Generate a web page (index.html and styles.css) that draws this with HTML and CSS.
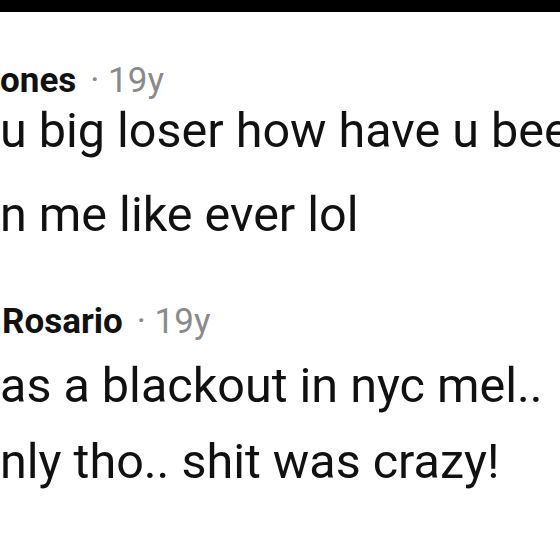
FILE: index.html
```html
<!DOCTYPE html>
<html>
<head>
<meta charset="utf-8">
<link rel="stylesheet" href="styles.css">
</head>
<body>
<div class="topbar"></div>
<div class="thread">
  <div class="comment first">
    <div class="meta"><span class="name">ones</span><span class="time">· 19y</span></div>
    <div class="body">
      <div class="line">u big loser how have u been</div>
      <div class="line">n me like ever lol</div>
    </div>
  </div>
  <div class="comment second">
    <div class="meta"><span class="name">Rosario</span><span class="time">· 19y</span></div>
    <div class="body">
      <div class="line">as a blackout in nyc mel..</div>
      <div class="line">nly tho.. shit was crazy!</div>
    </div>
  </div>
</div>
</body>
</html>
```
FILE: styles.css
```css
html, body {
  margin: 0;
  padding: 0;
  background: #fff;
  width: 560px;
  height: 560px;
  overflow: hidden;
}
body {
  font-family: Roboto, "Liberation Sans", sans-serif;
  color: #111;
}
.topbar {
  height: 12px;
  background: #000;
}
.thread {
  display: flex;
  flex-direction: column;
}
.comment {
  display: flex;
  flex-direction: column;
}
.first { padding-top: 49px; }
.second { padding-top: 59px; }
.meta {
  display: flex;
  align-items: baseline;
  gap: 14px;
  white-space: nowrap;
  line-height: 40px;
  margin-bottom: -4px;
}
.second .meta { padding-left: 2px; }
.name {
  font-weight: 700;
  font-size: 35px;
  color: #111;
}
.time {
  font-size: 35px;
  color: #8a8a8a;
}
.body {
  display: flex;
  flex-direction: column;
}
.first .body { padding-top: 6px; gap: 28px; }
.second .body { padding-top: 20px; gap: 20px; }
.line {
  font-size: 48.5px;
  line-height: 56px;
  white-space: nowrap;
  overflow: hidden;
}
```
